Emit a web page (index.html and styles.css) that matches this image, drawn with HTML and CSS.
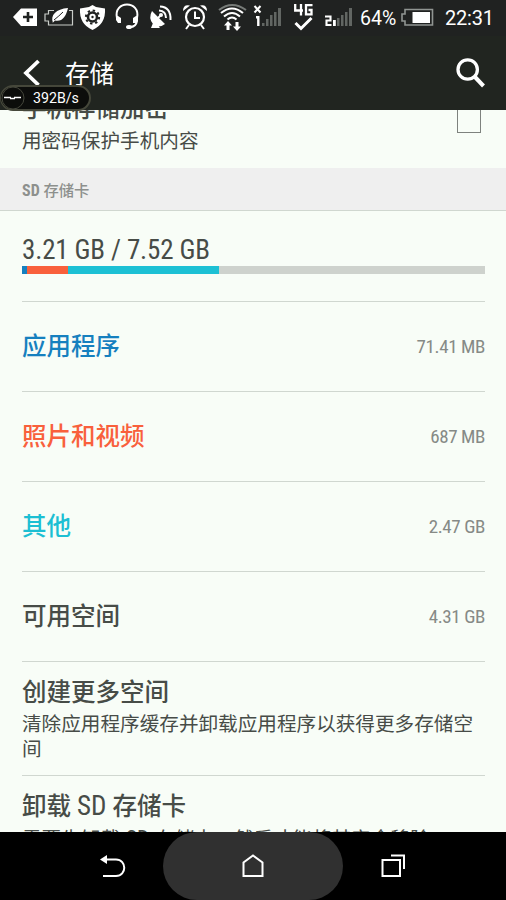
FILE: index.html
```html
<!DOCTYPE html>
<html lang="zh-CN">
<head>
<meta charset="utf-8">
<title>存储</title>
<link rel="stylesheet" href="styles.css">
</head>
<body>
<div class="phone">
  <header class="top">
    <div class="status">
      <svg width="32" height="36" viewBox="10 0 32 36"><path fill="#fff" d="M13 17 21 8.5H37V26H21Z"/><path stroke="#202221" stroke-width="2.6" d="M28 12v10M23 17h10"/></svg>
      <svg width="34" height="36" viewBox="42 0 34 36"><path fill="none" stroke="#c8ccc8" stroke-width="1.2" d="M54 10.500H48.500V14H45V21H48.500V25H72.500V10.500H69"/><path fill="#fff" d="M53 23C50 15 56 9 68 8C66 17 62 22 55 20.500L52.500 23Z"/><path fill="none" stroke="#202221" stroke-width="1" d="M54 20Q59 16 63 12"/></svg>
      <svg width="34" height="36" viewBox="76 0 34 36"><path fill="#fff" d="M92.500 5 96 7 105 8.500Q106 24 92.500 30Q79 24 80 8.500L89 7Z"/><g fill="none" stroke="#202221"><circle cx="92.500" cy="17" r="4.500" stroke-width="2.600"/><circle cx="92.500" cy="17" r="6.600" stroke-width="2" stroke-dasharray="2.400 2.780"/></g><circle cx="92.500" cy="17" r="1.200" fill="#202221"/></svg>
      <svg width="34" height="36" viewBox="110 0 34 36"><path fill="none" stroke="#fff" stroke-width="2" d="M117 18C113 0 141 0 137 18V21Q136 27 130 27"/><path fill="#fff" d="M116 16h2l3 2v5h-3l-2-3ZM138 16h-2l-3 2v5h3l2-3Z"/><ellipse cx="129" cy="27" rx="3" ry="2" fill="#fff"/></svg>
      <svg width="34" height="36" viewBox="144 0 34 36"><path fill="#fff" d="M152 11 165 24Q158 29 153 24Q148 18 152 11ZM153 23h3l4 5h-9Z"/><circle cx="161" cy="15" r="2" fill="#fff"/><path fill="none" stroke="#fff" stroke-width="2" d="M157 19 161 15M159 10.500Q166 11 166 18M160 6.500Q171 7 170.500 20"/></svg>
      <svg width="36" height="36" viewBox="178 0 36 36"><g fill="none" stroke="#fff"><circle cx="195" cy="17" r="9" stroke-width="2.200"/><path stroke-width="2" d="M195 11.500V18H200M189 25 186 29M201 25 204 29"/></g><path fill="#fff" d="M183 11Q183 4 190 5.500ZM207 11Q207 4 200 5.500Z"/></svg>
      <svg width="37" height="36" viewBox="214 0 37 36"><g fill="none" stroke="#fff" stroke-width="2.100"><path stroke="#777b78" d="M219 10Q232 0 246 10"/><path d="M221 13Q232 4 243 13M224 16.500Q232 9.500 240 16.500M227.500 19.500Q232 15.500 236.500 19.500"/></g><path fill="#fff" d="M228 21l4 4.500h-2.500V30h-3v-4.500H224ZM237 31l-4-4.500h2.500V22h3v4.500H241Z"/></svg>
      <svg width="37" height="36" viewBox="251 0 37 36"><path fill="none" stroke="#fff" stroke-width="2" d="M254.500 6 260.500 12.500M260.500 6 254.500 12.500"/><path fill="none" stroke="#fff" stroke-width="2.400" d="M256 17.200H258.300V26"/><path fill="#626663" d="M262 23h2.500v3H262ZM266 19h2.500v7H266ZM270 15h2.500v11H270ZM274 12h2.500v14H274ZM278 8h3v18h-3Z"/></svg>
      <svg width="34" height="36" viewBox="288 0 34 36"><g fill="none" stroke="#fff" stroke-width="2.300"><path d="M295.200 4V10.500H303M301 4V15.500M312.500 5.200H306V14.300H311.500V10H308.500"/><path stroke-width="3" d="M295.500 23 301 28.500 311.500 18"/></g></svg>
      <svg width="34" height="36" viewBox="322 0 34 36"><path fill="none" stroke="#fff" stroke-width="2.100" d="M325 16.500H330.500V20.500H326.500V25H331.500"/><path fill="#fff" d="M333 20h2.800v6H333Z"/><path fill="#626663" d="M337 18h2.500v8H337ZM341 15h2.500v11H341ZM345 12h2.500v14H345ZM349 8h3v18h-3Z"/></svg>
      <span class="percent">64%</span>
      <svg class="battery" width="40" height="36" viewBox="398 0 40 36"><path fill="none" stroke="#909592" stroke-width="1.600" d="M405 9.500H432.500V25H405V21H402V14H405Z"/><path fill="#fff" d="M412.500 12H430V23H412.500Z"/></svg>
      <span class="clock">22:31</span>
    </div>
    <div class="bar">
      <svg width="20" height="28" viewBox="0 0 20 28"><path fill="none" stroke="#fff" stroke-width="3.800" d="M17.500 2 5 14 17.500 26"/></svg>
      <h1>存储</h1>
      <svg class="search" width="32" height="32" viewBox="0 0 32 32"><circle cx="13.700" cy="12.500" r="9.700" fill="none" stroke="#fff" stroke-width="3.300"/><path stroke="#fff" stroke-width="4" d="M20.500 19.500 29.500 29"/></svg>
    </div>
    <div class="speed"><svg width="24" height="24" viewBox="0 0 24 24"><circle cx="12" cy="12" r="11" fill="#0c0d0b" stroke="#45473c"/><path stroke="#fff" stroke-width="1.300" d="M3 11.500h7M13 11.500h7M9 12.500h5"/></svg><span>392B/s</span></div>
  </header>

  <main>
    <section class="encrypt">
      <div><h2>手机存储加密</h2><p>用密码保护手机内容</p></div>
      <span class="check"></span>
    </section>
    <h3 class="section"><b class="cond">SD</b> 存储卡</h3>
    <div class="list">
      <section class="usage">
        <div class="total cond">3.21 GB / 7.52 GB</div>
        <div class="meter"><i class="m-apps"></i><i class="m-photos"></i><i class="m-other"></i></div>
      </section>
      <section class="row apps"><h2>应用程序</h2><span class="cond">71.41 MB</span></section>
      <section class="row photos"><h2>照片和视频</h2><span class="cond">687 MB</span></section>
      <section class="row other"><h2>其他</h2><span class="cond">2.47 GB</span></section>
      <section class="row"><h2>可用空间</h2><span class="cond">4.31 GB</span></section>
      <section class="action more"><h2>创建更多空间</h2><p>清除应用程序缓存并卸载应用程序以获得更多存储空间</p></section>
      <section class="action unmount"><h2>卸载 <span class="cond">SD</span> 存储卡</h2><p>需要先卸载 <span class="cond">SD</span> 存储卡，然后才能将其安全移除</p></section>
    </div>
  </main>

  <nav>
    <svg width="28" height="28" viewBox="0 0 28 28"><path fill="none" stroke="#fff" stroke-width="2" d="M8 7.500H17C28 7.500 28 24 17 24H4"/><path fill="#fff" d="M1 7.500 8 3V12Z"/></svg>
    <div class="home"><svg width="24" height="26" viewBox="0 0 24 26"><path fill="none" stroke="#fff" stroke-width="2" d="M2.500 23V9.500L12 2.500 21.500 9.500V23Z"/></svg></div>
    <svg width="26" height="26" viewBox="0 0 26 26"><path fill="none" stroke="#fff" stroke-width="2" d="M2.500 7H20V23H2.500ZM11 2.500H24V16"/></svg>
  </nav>
</div>
</body>
</html>
```
FILE: styles.css
```css
* { box-sizing: border-box; }
body { margin: 0; background: #f8fdf7; }
.phone {
  width: 506px; height: 900px; overflow: hidden;
  display: grid; grid-template-rows: 110px 722px 68px;
  font-family: Roboto, "Noto Sans CJK SC", sans-serif;
  color: #474c47;
}
h1, h2, h3, p { margin: 0; font-weight: 400; }
svg { display: block; flex: none; }
.cond { font-stretch: 75%; font-family: "Roboto Condensed", Roboto, "Noto Sans CJK SC", sans-serif; }

.top { background: #212520; color: #fff; position: relative; z-index: 1; }
.status {
  height: 36px; padding-left: 10px; background: #202221;
  display: flex; align-items: center; white-space: nowrap;
}
.percent { width: 42px; padding-left: 4px; font-size: 19.500px; }
.battery { margin-right: 7px; }
.clock { font-size: 20px; letter-spacing: -.2px; }
.bar { height: 74px; display: flex; align-items: center; padding: 0 20px 0 21px; }
h1 { margin: 3px 0 0 24px; font-size: 24.500px; line-height: 36px; }
.search { margin-left: auto; }
.speed {
  position: absolute; left: 0; top: 85px; width: 91px; height: 26px;
  display: flex; align-items: center;
  border: 2px solid #45473a; border-left-width: 1px; border-radius: 13px; background: #0c0d0b;
  font-size: 14.200px;
}
.speed span { margin-left: 8px; }

main { overflow: hidden; }
.encrypt { height: 58px; padding: 0 25px 0 22px; display: flex; justify-content: space-between; }
h2 { font-size: 24.500px; line-height: 32px; font-weight: 500; white-space: nowrap; }
.encrypt h2 { margin-top: -17px; }
p { font-size: 19.620px; line-height: 25px; }
.encrypt p { margin-top: 4px; }
.check { width: 24px; height: 25px; margin-top: -2px; border: 1px solid #7e827e; }
.section {
  height: 43px; padding-left: 22px; background: #efefef; border-bottom: 1px solid #d0d7d0;
  font-size: 15.300px; line-height: 45px; color: #8d908d; font-weight: 500;
}
.section b { font-size: 16px; }
.list { padding: 0 21px 0 22px; }
.usage { height: 91px; padding-top: 23px; border-bottom: 1px solid #d0d7d0; }
.total { font-size: 27px; line-height: 32px; letter-spacing: -.15px; }
.meter { height: 8px; display: flex; background: #ced2cd; }
.m-apps { width: 5px; background: #1680bf; }
.m-photos { width: 41px; background: #f9603c; }
.m-other { width: 151px; background: #1dc0d4; }
.row {
  height: 90px; border-bottom: 1px solid #d0d7d0;
  display: flex; justify-content: space-between; align-items: center;
}
.row span { font-size: 19px; letter-spacing: -.4px; color: #868a86; }
.apps h2 { color: #1680bf; }
.photos h2 { color: #f9603c; }
.other h2 { color: #1dbfd3; }
.action { padding-top: 15px; white-space: nowrap; }
.more { height: 114px; border-bottom: 1px solid #d0d7d0; white-space: normal; }
.action p { margin-top: 3px; }
.action h2 .cond { font-size: 27px; font-weight: 400; line-height: 1; }
.action p .cond { font-size: 21.500px; line-height: 1; }
.unmount p { margin-top: 4px; word-spacing: 1px; }

nav {
  background: #000; display: grid; grid-template-columns: 163px 180px 163px;
  align-items: center; justify-items: center;
}
nav > svg:first-child { margin-left: 62px; }
nav > svg:last-child { margin-right: 63px; }
.home {
  width: 180px; height: 68px; border-radius: 34px; background: #303030;
  display: grid; place-items: center;
}
```
